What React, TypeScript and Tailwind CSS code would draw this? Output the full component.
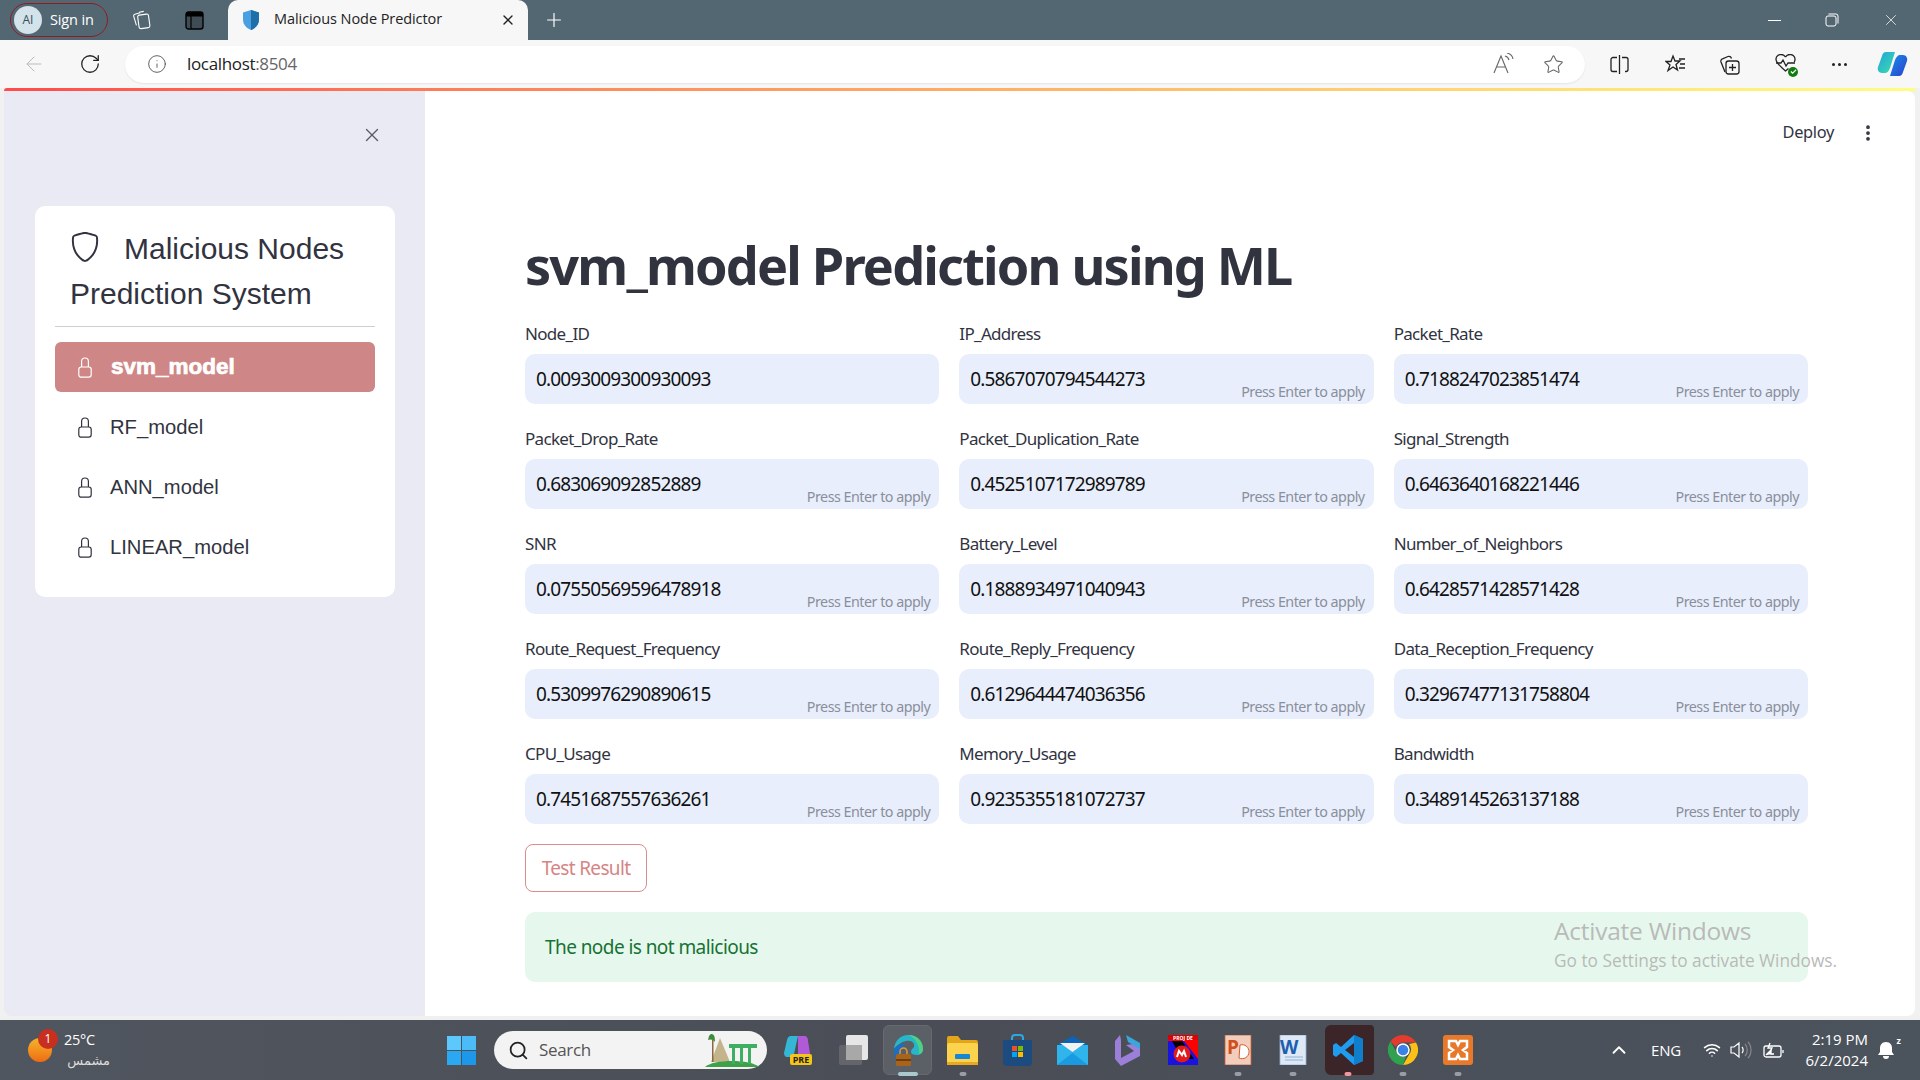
import { ArrowLeft, ChevronUp, EllipsisVertical, Info, Plus, RotateCw, Search, Star, Wifi, X } from 'lucide-react'
import { BsShield } from 'react-icons/bs'

const fields = [
  ['Node_ID', '0.0093009300930093', false],
  ['IP_Address', '0.5867070794544273', true],
  ['Packet_Rate', '0.7188247023851474', true],
  ['Packet_Drop_Rate', '0.683069092852889', true],
  ['Packet_Duplication_Rate', '0.4525107172989789', true],
  ['Signal_Strength', '0.6463640168221446', true],
  ['SNR', '0.07550569596478918', true],
  ['Battery_Level', '0.1888934971040943', true],
  ['Number_of_Neighbors', '0.6428571428571428', true],
  ['Route_Request_Frequency', '0.5309976290890615', true],
  ['Route_Reply_Frequency', '0.6129644474036356', true],
  ['Data_Reception_Frequency', '0.32967477131758804', true],
  ['CPU_Usage', '0.7451687557636261', true],
  ['Memory_Usage', '0.9235355181072737', true],
  ['Bandwidth', '0.3489145263137188', true],
] as const

const models = ['svm_model', 'RF_model', 'ANN_model', 'LINEAR_model']

function LockIcon({ className = '' }: { className?: string }) {
  return (
    <svg width="14" height="21" viewBox="0 0 14 21" fill="none" stroke="currentColor" strokeWidth="1.2" className={className}>
      <rect x="0.8" y="10" width="12.4" height="10.2" rx="2.4" />
      <path d="M3.6 10V4.4a3.4 3.4 0 0 1 6.8 0V10" />
    </svg>
  )
}

function Field({ label, value, hint }: { label: string; value: string; hint: boolean }) {
  return (
    <div>
      <div className="mb-[8px] h-[25px] text-[17px] leading-[26px] tracking-[-0.04em] text-[#31333f]">{label}</div>
      <div className="relative h-[50px] rounded-[10px] bg-[#e8eefb]">
        <input readOnly value={value} className="h-full w-full bg-transparent pl-[11px] text-[19px] tracking-[-0.045em] text-[#111] outline-none" />
        {hint && <span className="absolute right-[9px] bottom-[2px] text-[14.3px] tracking-[-0.035em] text-[#8a8f9c]">Press Enter to apply</span>}
      </div>
    </div>
  )
}

function TabBar() {
  return (
    <div className="flex h-10 items-center bg-[#536773] text-white">
      <div className="ml-[10px] flex h-[34px] w-[98px] items-center rounded-full border border-[#8e1d24] pl-[3px]">
        <span className="flex h-[28px] w-[28px] items-center justify-center rounded-full bg-[#d4e2e9] text-[12px] text-[#33505e]">AI</span>
        <span className="ml-2 text-[14.5px] tracking-[-0.01em]">Sign in</span>
      </div>
      <div className="ml-[23px] flex w-[20px] justify-center">
        <svg width="22" height="22" viewBox="0 0 22 22" fill="none" stroke="#fff" strokeWidth="1.2">
          <rect x="8" y="5" width="12" height="15" rx="2" transform="rotate(-8 14 12)" />
          <path d="M6 17 3 7c-.3-1 .2-2 1.2-2.300L10 3M9 2.500l5-1" />
        </svg>
      </div>
      <div className="ml-[33px] flex w-[20px] justify-center">
        <svg width="19" height="19" viewBox="0 0 19 19">
          <rect x="1" y="1" width="17" height="17" rx="2.500" fill="#3f4c54" stroke="#000" strokeWidth="1.400" />
          <rect x="1" y="1" width="17" height="4.500" fill="#000" />
          <path d="M6 5v13" stroke="#000" strokeWidth="1.200" />
        </svg>
      </div>
      <div className="ml-[24px] flex h-10 w-[300px] items-center self-end rounded-t-[10px] bg-[#f7f7f7] pl-[15px] text-[#222]">
        <svg width="18" height="20" viewBox="0 0 18 20" className="-ml-[1px]">
          <path d="M9 0 1 2.500v7C1 15 5 18.500 9 20c4-1.500 8-5 8-10.500v-7z" fill="#4a9fe3" />
          <path d="M9 0l8 2.500v7c0 5.500-4 9-8 10.500z" fill="#1f6fa8" />
        </svg>
        <span className="ml-[14px] -mt-[2px] w-[226px] text-[14.500px] tracking-[-0.005em]">Malicious Node Predictor</span>
        <X size={16} strokeWidth={2} />
      </div>
      <Plus size={22} strokeWidth={1.300} className="ml-[15px]" />
      <div className="ml-auto flex items-center">
        <div className="h-px w-[13px] bg-white" />
        <svg width="14" height="14" viewBox="0 0 14 14" fill="none" stroke="#fff" className="ml-[44px]">
          <rect x="1" y="3" width="10" height="10" rx="2" />
          <path d="M3.500 1H11a2 2 0 0 1 2 2v7.500" />
        </svg>
        <X size={18} strokeWidth={1} className="mr-[20px] ml-[43px]" />
      </div>
    </div>
  )
}

function ToolBar() {
  return (
    <div className="flex h-[48px] items-center bg-[#f7f7f7] text-[#222]">
      <ArrowLeft size={24} strokeWidth={1} className="ml-[22px] text-[#bbb]" />
      <RotateCw size={22} strokeWidth={1.400} className="ml-[33px]" />
      <div className="ml-[24px] flex h-[37px] w-[1460px] items-center rounded-full bg-white pl-[22px] shadow-[0_1px_2px_rgba(0,0,0,0.08)]">
        <Info size={20} strokeWidth={1} className="text-[#444]" />
        <span className="ml-[20px] text-[17px] tracking-[-0.02em]">
          localhost<span className="text-[#666]">:8504</span>
        </span>
        <div className="mr-[21px] ml-auto flex items-center gap-[28px] text-[#666]">
          <svg width="22" height="22" viewBox="0 0 22 22" fill="none" stroke="currentColor" strokeWidth="1.100">
            <path d="M1 20 8 3l7 17M3.500 14h9" />
            <path d="M12 3c2 .5 3.500 2 4 4M14 0c3 .7 5.500 3 6 6" />
          </svg>
          <Star size={21} strokeWidth={1.200} />
        </div>
      </div>
      <svg width="19" height="19" viewBox="0 0 19 19" fill="none" stroke="#222" strokeWidth="1.300" className="ml-[25px]">
        <path d="M9.500 0v19M7 2.500H3a2 2 0 0 0-2 2v10a2 2 0 0 0 2 2h4M12 2.500h4a2 2 0 0 1 2 2v10a2 2 0 0 1-2 2h-1" />
      </svg>
      <svg width="21" height="20" viewBox="0 0 21 20" fill="none" stroke="#222" strokeWidth="1.300" className="ml-[36px]">
        <path d="m8 2 2 5h5l-4 3.500 1.500 5.500L8 13l-5 3.500L5 11 1 7.500h5z" />
        <path d="M14 5h6M15 10h5M14 14h6" />
      </svg>
      <svg width="21" height="21" viewBox="0 0 21 21" fill="none" stroke="#222" strokeWidth="1.300" className="ml-[33px]">
        <path d="M6 18 2 8c-.5-1.500.2-2.800 1.500-3.200L9 2.500c1.500-.5 3 .2 3.500 2" />
        <rect x="7" y="7" width="13" height="13" rx="2.500" />
        <path d="M13.500 10v7M10 13.500h7" />
      </svg>
      <div className="relative ml-[35px] h-[21px] w-[21px]">
        <svg width="21" height="19" viewBox="0 0 21 19" fill="none" stroke="#222" strokeWidth="1.300">
          <path d="M10.500 3C8-1 1.500 0 1 5c-.3 3 3 6.500 9.500 12 1-.8 2-1.600 3-2.500M10.500 3c2.500-4 9-3 9.500 2 .1 1-.2 2-.7 3" />
          <path d="M1 9h5l2-3 3 6 2-3h7" />
        </svg>
        <span className="absolute right-[-2px] bottom-[-2px] flex h-[10px] w-[10px] items-center justify-center rounded-full bg-[#107c10]">
          <svg width="7" height="7" viewBox="0 0 8 8" fill="none" stroke="#fff" strokeWidth="1.300"><path d="m1 4 2 2 4-4" /></svg>
        </span>
      </div>
      <div className="ml-[36px] flex gap-[3px]">
        <span className="h-[3px] w-[3px] rounded-full bg-[#222]" />
        <span className="h-[3px] w-[3px] rounded-full bg-[#222]" />
        <span className="h-[3px] w-[3px] rounded-full bg-[#222]" />
      </div>
      <svg width="31" height="28" viewBox="0 0 31 28" className="ml-[30px]">
        <defs>
          <linearGradient id="cpA" x1="0" y1="0" x2="1" y2="1"><stop offset="0" stopColor="#1fa6d8" /><stop offset="1" stopColor="#3fdcae" /></linearGradient>
          <linearGradient id="cpB" x1="0" y1="0" x2="1" y2="1"><stop offset="0" stopColor="#1b8fe8" /><stop offset="1" stopColor="#2a3fd0" /></linearGradient>
        </defs>
        <path d="M9 2h9l-5 16c-1 3-3 5-5 5H5c-3 0-5-3-4-6L5 6c.6-2.500 2-4 4-4z" fill="url(#cpA)" />
        <path d="M22 26h-9l5-16c1-3 3-5 5-5h3c3 0 5 3 4 6l-4 11c-.6 2.500-2 4-4 4z" fill="url(#cpB)" />
      </svg>
    </div>
  )
}

function Sidebar() {
  return (
    <aside className="ml-1 flex w-[421px] shrink-0 flex-col rounded-bl-lg bg-[#e9eaf3] font-['Liberation_Sans',sans-serif]">
      <div className="flex h-[115px] justify-end pt-[33px] pr-[42px] text-[#5a5c68]">
        <X size={22} strokeWidth={1.500} />
      </div>
      <div className="mr-[30px] ml-[31px] h-[391px] rounded-[10px] bg-white px-5 pt-[20px]">
        <div className="px-[15px] text-[30px] leading-[45px] text-[#31333f]">
          <BsShield size={30} className="mr-[24px] inline-block align-[-3px]" />
          Malicious Nodes
          <br />
          Prediction System
        </div>
        <div className="mt-[10px] mb-[15px] h-px bg-[#cfcfd3]" />
        <div className="flex flex-col gap-[10px]">
          {models.map((m, i) => (
            <div
              key={m}
              className={
                i === 0
                  ? 'flex h-[50px] items-center rounded-md bg-[#ce8786] pl-[23px] text-[22.500px] font-black text-white [-webkit-text-stroke:0.7px_white]'
                  : 'flex h-[50px] items-center rounded-md pl-[23px] text-[20.200px] text-[#31333f]'
              }
            >
              <LockIcon />
              <span className={i === 0 ? 'ml-[19px]' : 'ml-[18px]'}>{m}</span>
            </div>
          ))}
        </div>
      </div>
    </aside>
  )
}

function Main() {
  return (
    <main className="relative flex-1 rounded-tr-lg rounded-br-lg bg-white pr-[107px] pl-[100px] font-['Noto_Sans',sans-serif]">
      <div className="-mr-[58px] flex h-[70px] items-center justify-end pt-[13px] text-[#31333f]">
        <span className="text-[16.400px] tracking-[-0.02em]">Deploy</span>
        <EllipsisVertical size={20} strokeWidth={2.500} className="mr-[-12px] ml-[24px]" />
      </div>
      <h1 className="mt-[69px] h-[91px] text-[52.200px] leading-[70px] font-bold tracking-[-0.035em] text-[#31333f]">svm_model Prediction using ML</h1>
      <div className="grid grid-cols-3 gap-x-5 gap-y-[22px]">
        {fields.map(([label, value, hint]) => (
          <Field key={label} label={label} value={value} hint={hint} />
        ))}
      </div>
      <button className="mt-5 h-12 w-[122px] rounded-lg border border-[#d98d8d] text-[19px] tracking-[-0.035em] text-[#d68585]">Test Result</button>
      <div className="mt-5 flex h-[70px] items-center rounded-[10px] bg-[#e6f8ed] pl-5 text-[19px] tracking-[-0.03em] text-[#177233]">The node is not malicious</div>
      <div className="absolute top-[824px] left-[1129px] text-[#b9bab8]">
        <div className="text-[24.500px] leading-8 font-['Open_Sans',sans-serif] tracking-[-0.01em]">Activate Windows</div>
        <div className="mt-[2px] text-[17.300px] leading-6 font-['Open_Sans',sans-serif]">Go to Settings to activate Windows.</div>
      </div>
    </main>
  )
}

function Indicator({ color = 'bg-[#9a9da3]', w = 'w-[7px]' }: { color?: string; w?: string }) {
  return <span className={`absolute bottom-[4px] left-1/2 h-1 -translate-x-1/2 rounded-full ${color} ${w}`} />
}

function TaskIcons() {
  return (
    <div className="ml-[3px] flex h-full">
      {/* copilot pre */}
      <div className="relative flex w-[55px] items-center justify-center">
        <svg width="30" height="32" viewBox="0 0 30 32">
          <path d="M8 2h7l-4 18c-.5 2-2 3-4 3H4c-2 0-3-2-3-4L4 6c.5-2.500 2-4 4-4z" fill="#35b6d6" />
          <path d="M15 2h6c3 0 4 2 4 5l2 12c0 2-1 4-3 4h-9z" fill="#b05ad8" />
          <rect x="7" y="20" width="22" height="11" rx="2" fill="#f5c518" />
          <text x="18" y="29" textAnchor="middle" fontSize="9" fontWeight="700" fill="#222">PRE</text>
        </svg>
      </div>
      {/* task view */}
      <div className="relative flex w-[55px] items-center justify-center">
        <svg width="30" height="32" viewBox="0 0 30 32">
          <rect x="1" y="11" width="23" height="20" rx="2" fill="#63656a" />
          <rect x="8" y="1" width="22" height="25" rx="2" fill="#e6e6e6" />
          <rect x="8" y="11" width="16" height="15" fill="#a8a8a8" />
        </svg>
      </div>
      {/* edge, running */}
      <div className="relative flex w-[55px] items-center justify-center">
        <div className="flex h-[50px] w-[49px] items-center justify-center rounded-md border border-[#666a70] bg-[#5b5f66]">
          <svg width="32" height="33" viewBox="0 0 32 33">
            <path d="M2 15C3 6 9 1 16 1c9 0 15 6 15 14 0 4-3 6-6 6-4 0-6-1-6-3 0-4 4-3 3-8-1-3-5-4-8-3C9 8 5 11 2 15z" fill="#27b5c9" />
            <path d="M16 1c9 0 15 6 15 14 0 3-2 5-4 5 1-8-3-16-11-19z" fill="#4fd27f" />
            <path d="M2 15c3-4 8-6 12-5-3 2-6 6-6 12 0 3 1 6 3 9C5 29 1 22 2 15z" fill="#1a6fc4" />
            <rect x="4" y="20" width="15" height="12" rx="1.500" fill="#a8641c" />
            <rect x="4" y="25" width="15" height="2" fill="#6d3f0f" />
            <path d="M8 20v-2.500a3.500 3.500 0 0 1 7 0V20" fill="none" stroke="#d99a3a" strokeWidth="1.500" />
          </svg>
        </div>
        <Indicator color="bg-[#a9c9cf]" w="w-[20px]" />
      </div>
      {/* explorer */}
      <div className="relative flex w-[55px] items-center justify-center">
        <svg width="31" height="29" viewBox="0 0 31 29">
          <path d="M0 2a2 2 0 0 1 2-2h9l3 4h15a2 2 0 0 1 2 2v5H0z" fill="#e3a61b" />
          <rect y="7" width="31" height="22" rx="2" fill="#fcd34d" />
          <rect x="8" y="18" width="15" height="5" rx="1" fill="#1686d8" />
          <rect y="26" width="31" height="3" fill="#e9a91f" />
        </svg>
        <Indicator />
      </div>
      {/* store */}
      <div className="relative flex w-[55px] items-center justify-center">
        <svg width="29" height="32" viewBox="0 0 29 32">
          <path d="M9 7V4a3 3 0 0 1 3-3h5a3 3 0 0 1 3 3v3" fill="none" stroke="#2aa8e8" strokeWidth="2" />
          <path d="M0 6h29v22a4 4 0 0 1-4 4H4a4 4 0 0 1-4-4z" fill="#1c4b80" />
          <rect x="9" y="12" width="5" height="5" fill="#f25022" />
          <rect x="15" y="12" width="5" height="5" fill="#7fba00" />
          <rect x="9" y="18" width="5" height="5" fill="#00a4ef" />
          <rect x="15" y="18" width="5" height="5" fill="#ffb900" />
        </svg>
      </div>
      {/* mail */}
      <div className="relative flex w-[55px] items-center justify-center">
        <svg width="31" height="29" viewBox="0 0 31 29">
          <path d="M0 9 15.500 0 31 9v20H0z" fill="#0a64b8" />
          <path d="M0 9h31v20H0z" fill="#2fb5ec" />
          <path d="m3 7 12.500 9L28 7z" fill="#f2f2f2" />
          <path d="m0 29 15.500-12L31 29z" fill="#1a9ae0" />
        </svg>
      </div>
      {/* bing */}
      <div className="relative flex w-[55px] items-center justify-center">
        <svg width="27" height="31" viewBox="0 0 27 31">
          <path d="M6 0 1 6v18l6 7 19-10v-8l-7-4-7 1 8 6-13 7V5z" fill="#9b7fd8" />
          <path d="M12 0l14 8v6L14 7z" fill="#3aa6dc" />
        </svg>
      </div>
      {/* microchip */}
      <div className="relative flex w-[55px] items-center justify-center">
        <svg width="30" height="30" viewBox="0 0 30 30">
          <rect width="30" height="30" fill="#1a12e0" />
          <path d="M0 0h30v24L16 6H0z" fill="#f00" />
          <rect y="0" width="30" height="5" fill="#d00" />
          <text x="15" y="4.500" textAnchor="middle" fontSize="5" fontWeight="700" fill="#fff">PROJ DE</text>
          <path d="M4 6h10l12 18H14z" fill="#000" />
          <circle cx="14" cy="19" r="8.500" fill="#e01b1b" />
          <path d="M9 22l2-6 3 4 2-4 2 6" stroke="#fff" strokeWidth="2" fill="none" />
        </svg>
      </div>
      {/* powerpoint */}
      <div className="relative flex w-[55px] items-center justify-center">
        <svg width="28" height="30" viewBox="0 0 28 30">
          <rect x="1" y="0" width="26" height="30" fill="#f3cdbb" stroke="#c8623a" strokeWidth="0.800" />
          <path d="M16 10a7 7 0 1 1-1 13z" fill="#fff" stroke="#d65a2a" />
          <text x="3" y="19" fontSize="19" fontWeight="700" fill="#d04f1c">P</text>
        </svg>
        <Indicator />
      </div>
      {/* word */}
      <div className="relative flex w-[55px] items-center justify-center">
        <svg width="28" height="30" viewBox="0 0 28 30">
          <rect x="1" y="0" width="26" height="30" fill="#dfe9f6" stroke="#8fb0d6" strokeWidth="0.800" />
          <text x="1" y="19" fontSize="19" fontWeight="700" fill="#1d5fb0">W</text>
          <path d="M6 22h18M6 25h18" stroke="#8fb0d6" />
        </svg>
        <Indicator />
      </div>
      {/* vscode, flagged */}
      <div className="relative flex w-[55px] items-center justify-center">
        <div className="flex h-[50px] w-[46px] items-center justify-center rounded-l-md rounded-r-sm bg-[#3b2528] shadow-[3px_0_0_#3b2528]">
          <svg width="30" height="30" viewBox="0 0 30 30">
            <path d="M21 0 30 4v22l-9 4L8 18l-5 4-3-2v-10l3-2 5 4z" fill="#1f9cf0" />
            <path d="M21 8 12 15l9 7z" fill="#3b2528" />
            <path d="M21 0 30 4v22l-9 4z" fill="#0f7fcc" />
          </svg>
        </div>
        <Indicator color="bg-[#f0979b]" />
      </div>
      {/* chrome */}
      <div className="relative flex w-[55px] items-center justify-center">
        <svg width="30" height="30" viewBox="0 0 30 30">
          <path d="M15 0a15 15 0 0 1 13 7.500H15a7.500 7.500 0 0 0-7 4.500L2.500 6.500A15 15 0 0 1 15 0z" fill="#e33b2e" />
          <path d="M28 7.500A15 15 0 0 1 15 30l6.500-11.200A7.500 7.500 0 0 0 21 9z" fill="#fbc116" />
          <path d="M2.500 6.500 9 18a7.500 7.500 0 0 0 9 3.500L15 30A15 15 0 0 1 2.500 6.500z" fill="#2fa14f" />
          <circle cx="15" cy="15" r="6" fill="#3b82e8" stroke="#fff" strokeWidth="1.500" />
        </svg>
        <Indicator />
      </div>
      {/* xampp */}
      <div className="relative flex w-[55px] items-center justify-center">
        <svg width="30" height="30" viewBox="0 0 30 30">
          <rect width="30" height="30" rx="3" fill="#e8792a" />
          <path d="M6 6h7l2 4 2-4h7v6l-4 3 4 3v6h-7l-2-4-2 4H6v-6l4-3-4-3z" fill="none" stroke="#fff" strokeWidth="2.500" />
        </svg>
        <Indicator />
      </div>
    </div>
  )
}

function Taskbar() {
  return (
    <footer className="flex h-[60px] items-center bg-gradient-to-r from-[#50565f] via-[#4a4d55] to-[#4b535d] font-['Open_Sans','DejaVu_Sans',sans-serif] text-white">
      <div className="relative ml-[28px] h-[24px] w-[24px] rounded-full bg-gradient-to-b from-[#f2b52a] to-[#ee6a12]">
        <span className="absolute -top-[9px] left-[10px] flex h-[20px] w-[20px] items-center justify-center rounded-full bg-[#c92f1f] text-[12px]">1</span>
      </div>
      <div className="ml-[12px] w-[383px]">
        <div className="text-[14.500px] leading-[20px] tracking-[-0.02em]">25°C</div>
        <div dir="rtl" className="w-[46px] text-[13px] leading-[20px] text-[#ddd]">مشمس</div>
      </div>
      <div className="grid h-[29px] w-[29px] grid-cols-2 gap-[1px]">
        <span className="bg-[#5cc8fb]" />
        <span className="bg-[#4bbcf7]" />
        <span className="bg-[#2aa8f2]" />
        <span className="bg-[#1d97ea]" />
      </div>
      <div className="ml-[18px] flex h-[38px] w-[273px] items-center rounded-full bg-[#f3f3f3] pl-[14px] text-[#555]">
        <Search size={21} strokeWidth={2} className="text-[#222]" />
        <span className="ml-[10px] text-[17px] tracking-[-0.02em]">Search</span>
        <svg width="58" height="36" viewBox="0 0 58 36" className="ml-auto mr-[6px]">
          <path d="M8 30 17 6l10 24z" fill="#c4b48c" />
          <path d="M8 2c3 0 4 2 4 8-2-3-5-3-7-2 1-2 0-4 3-6z" fill="#3d8c3a" />
          <rect x="9" y="8" width="1.500" height="22" fill="#8a6a3c" />
          <path d="M2 35c8-8 46-8 54 0z" fill="#3fa04c" />
          <rect x="26" y="12" width="28" height="4" fill="#3fae62" />
          <path d="M29 16h3v16h-3zM37 16h3v16h-3zM45 16h3v16h-3z" fill="#3fae62" />
        </svg>
      </div>
      <TaskIcons />
      <ChevronUp size={22} strokeWidth={2} className="ml-[123px]" />
      <span className="ml-[21px] text-[15px] tracking-[-0.01em]">ENG</span>
      <Wifi size={18} strokeWidth={2} className="ml-[22px]" />
      <svg width="24" height="18" viewBox="0 0 24 18" fill="none" stroke="#fff" strokeWidth="1.200" className="ml-[9px]">
        <path d="M1 6h3l5-4v14l-5-4H1zM12 6c1.500 1.500 1.500 4.500 0 6" />
        <path d="M15 3c3 3 3 9 0 12M18 1c4 4 4 12 0 16" stroke="#888" />
      </svg>
      <svg width="21" height="19" viewBox="0 0 21 19" fill="none" stroke="#fff" strokeWidth="1.300" className="ml-[9px]">
        <rect x="1" y="5" width="17" height="11" rx="2" />
        <path d="M20 9v3" />
        <path d="M3 14l5-5v4h3" fill="#fff" />
        <path d="M7 2 5 7h4L7 11" />
      </svg>
      <div className="ml-auto text-right text-[15px] leading-[21px]">
        <div>2:19 PM</div>
        <div>6/2/2024</div>
      </div>
      <div className="relative mr-[23px] ml-[9px] h-[20px] w-[20px]">
        <svg width="18" height="20" viewBox="0 0 18 20" fill="#fff">
          <path d="M9 2c4 0 6 3 6 6v4l2 3H1l2-3V8c0-3 2-6 6-6zM6 16h6a3 3 0 0 1-6 0z" />
        </svg>
        <span className="absolute top-[-4px] right-[-4px] text-[9px] leading-none font-bold">z</span>
      </div>
    </footer>
  )
}

export default function App() {
  return (
    <div className="flex h-screen flex-col overflow-hidden bg-[#f1f1f1] font-['Open_Sans',sans-serif]">
      <TabBar />
      <ToolBar />
      <div className="mx-[4px] h-[3px] rounded-t-sm bg-gradient-to-r from-[#ff4b4b] to-[#fffd80]" />
      <div className="flex h-[925px] pr-[5px]">
        <Sidebar />
        <Main />
      </div>
      <div className="h-[4px] bg-[#f0f0f0]" />
      <Taskbar />
    </div>
  )
}
